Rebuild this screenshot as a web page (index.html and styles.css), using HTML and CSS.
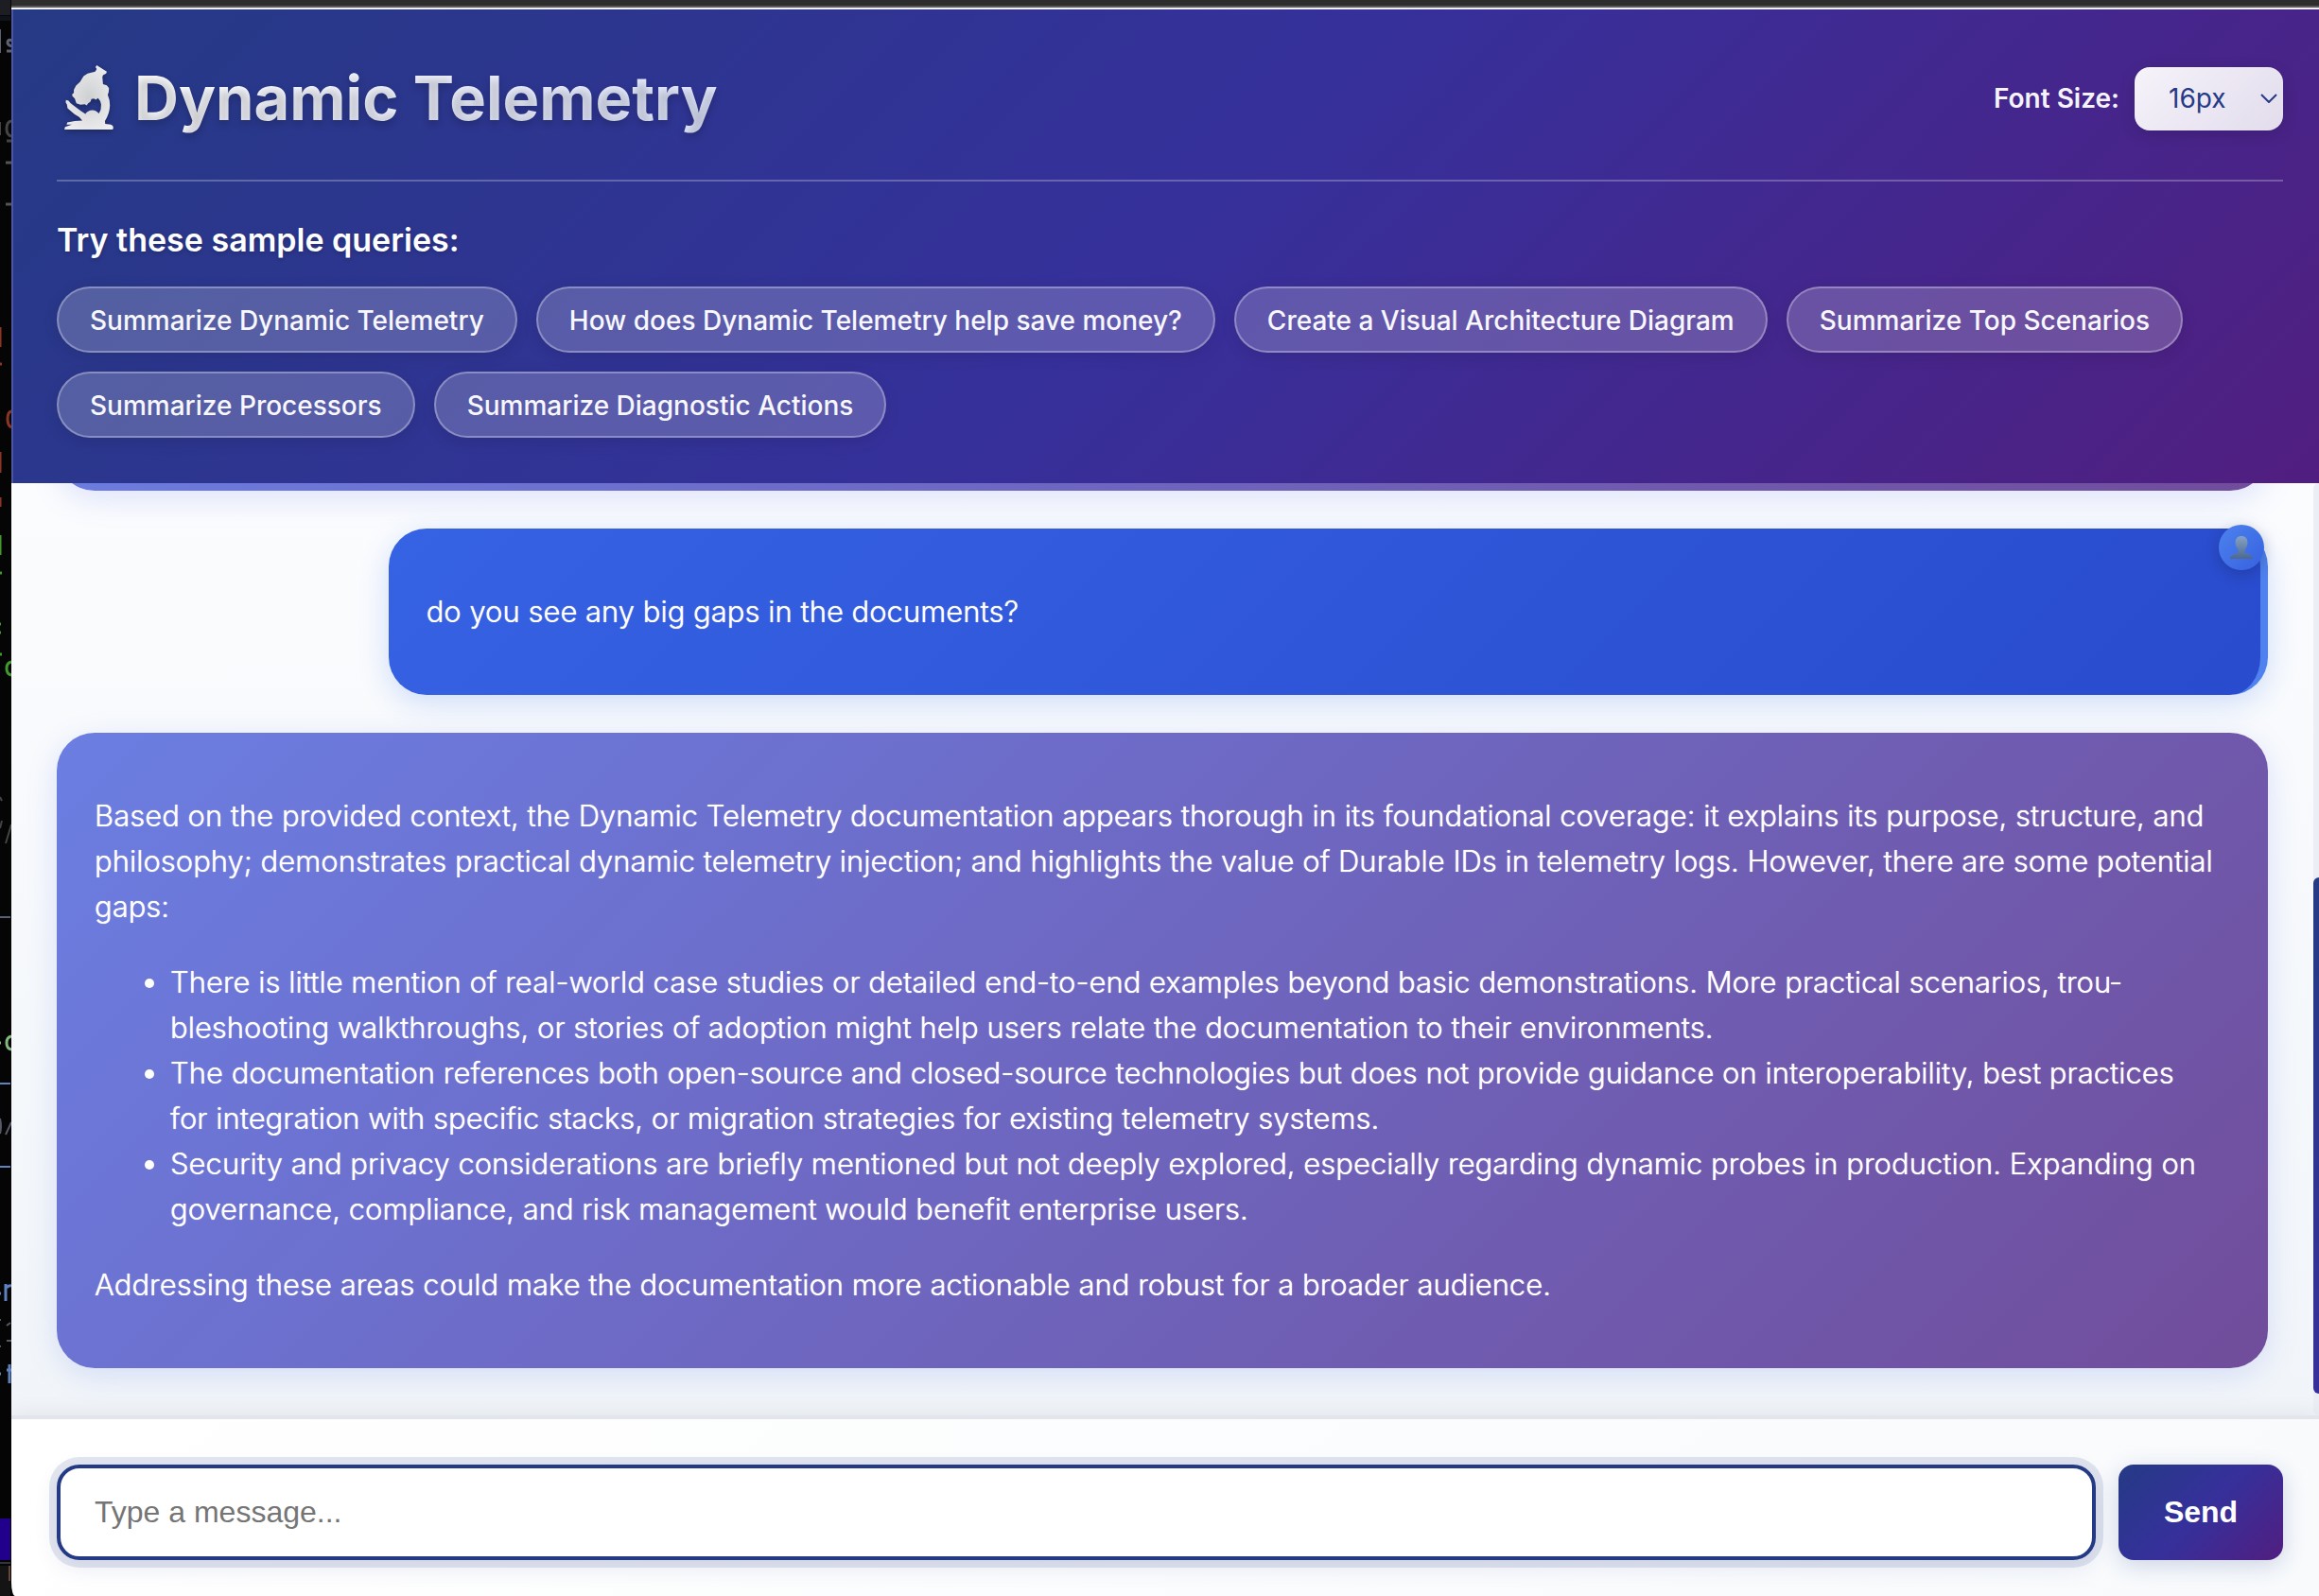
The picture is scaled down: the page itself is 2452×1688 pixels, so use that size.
FILE: index.html
```html
<!DOCTYPE html>
<html lang="en">
<head>
<meta charset="utf-8">
<title>Dynamic Telemetry</title>
<link rel="stylesheet" href="styles.css">
</head>
<body>
<div class="desktop">
  <svg class="terminal" width="12" height="1688" viewBox="0 0 12 1688" aria-hidden="true">
    <rect width="11" height="16" fill="#1c1e24"/>
    <rect y="17" width="11" height="5" fill="#0e131b"/>
    <g fill="none" stroke-width="3">
      <path d="M0 31v25" stroke="#5d6273" stroke-width="2"/>
      <path d="M13 43q-5-2-5 2 0 3 5 4M7 54h5" stroke="#5d6273"/>
      <path d="M0 129v14" stroke="#444" stroke-width="2"/>
      <path d="M12 128q-5 1-5 8t5 8M7 149h5" stroke="#444"/>
      <path d="M6 172h6M6 216h6" stroke="#555"/>
      <path d="M0 346v21M0 478v22M0 526v10" stroke="#8c3526" stroke-width="3"/>
      <path d="M0 385h2M12 435q-4 1-4 8t4 9" stroke="#8c3526"/>
      <path d="M0 566v21M0 606h2M0 660h1M0 669h1M0 692h2M12 700q-5 1-5 7t5 7" stroke="#419a2d"/>
      <path d="M0 843l2 4M0 876l2-8M6 892l6-20" stroke="#444" stroke-width="2"/>
      <path d="M0 970h11" stroke="#5b5f75" stroke-width="2"/>
      <path d="M0 1103h1M12 1096q-5 1-5 7t5 7" stroke="#84b97e"/>
      <path d="M0 1146h11M0 1234h11" stroke="#5e82bd" stroke-width="2"/>
      <path d="M0 1183q2 8 0 16M6 1200l6-13" stroke="#555968" stroke-width="2"/>
      <path d="M0 1368h1M6 1358v18M7 1362q2-3 5-2M0 1453h1M7 1449h5M10 1443v20" stroke="#5e82bd"/>
      <path d="M7 1402l4-3M7 1418h5M0 1396h1M0 1424h1" stroke="#555968" stroke-width="2"/>
    </g>
    <rect y="1606" width="11" height="44" fill="#21008c"/>
    <rect y="1652" width="11" height="2" fill="#333638"/>
    <rect y="1656" width="11" height="32" fill="#141414"/>
    <path d="M10 1656v16" stroke="#6b4537" stroke-width="2"/>
  </svg>

  <div class="window">
    <div class="titlebar"></div>
    <header class="header">
      <div class="header-top">
        <h1 class="title">
          <svg class="microscope" viewBox="60 54 204 214" aria-hidden="true">
            <defs>
              <radialGradient id="metal" cx="50%" cy="50%" r="60%">
                <stop offset="0" stop-color="#cfd0d2"/>
                <stop offset="1" stop-color="#eeeeef"/>
              </radialGradient>
            </defs>
            <path fill="url(#metal)" d="M187 54L219 74 217 80 207 86 205 92 207 114 219 118 226 127 225 140 222 148Q229 164 229 182 228 208 213 232L214 241 232 243Q240 246 240 253L238 259H84L86 251 108 243 91 243 93 236 117 232 141 230 131 219 116 210 94 191 92 179 88 172 89 165 97 167 104 175 137 200 151 209Q158 198 173 197 186 198 194 208 202 196 201 180 199 166 191 159L184 164 178 160 170 162 167 170 159 176 155 182 149 178 135 180 122 175 117 160 109 152 109 146 114 142 114 132 121 119 134 107 145 89 158 80 182 74 187 66 183 60Z"/>
          </svg>
          <span class="title-text">Dynamic Telemetry</span>
        </h1>
        <div class="font-control">
          <label for="font-size">Font Size:</label>
          <div class="select-wrap">
            <select id="font-size" class="font-select">
              <option>14px</option>
              <option selected>16px</option>
              <option>18px</option>
            </select>
            <svg class="chevron" viewBox="0 0 18 10" aria-hidden="true"><path d="M1 1l8 8 8-8" fill="none" stroke="#253a85" stroke-width="2"/></svg>
          </div>
        </div>
      </div>
      <h2 class="samples-title">Try these sample queries:</h2>
      <div class="samples">
        <button type="button" class="sample">Summarize Dynamic Telemetry</button>
        <button type="button" class="sample">How does Dynamic Telemetry help save money?</button>
        <button type="button" class="sample">Create a Visual Architecture Diagram</button>
        <button type="button" class="sample">Summarize Top Scenarios</button>
        <button type="button" class="sample">Summarize Processors</button>
        <button type="button" class="sample">Summarize Diagnostic Actions</button>
      </div>
    </header>

    <main class="chat">
      <div class="messages">
        <div class="message assistant previous"></div>
        <div class="message user">
          <p>do you see any big gaps in the documents?</p>
          <span class="avatar">
            <svg viewBox="0 0 24 24" aria-hidden="true">
              <defs>
                <linearGradient id="bust" x1="0" y1="0" x2="0" y2="1">
                  <stop offset="0" stop-color="#86a3c6"/>
                  <stop offset="1" stop-color="#4c6890"/>
                </linearGradient>
              </defs>
              <path fill="url(#bust)" d="M12 0c4 0 6.500 2.500 6.500 7 0 3-1.500 5.500-3 7.500v2.500c1.500 2 7 1.500 8.500 6.500v.5H0v-.5c1.500-5 7-4.500 8.500-6.500v-2.500c-1.500-2-3-4.500-3-7.500 0-4.500 2.500-7 6.500-7z"/>
            </svg>
          </span>
        </div>
        <div class="message assistant">
          <p>Based on the provided context, the Dynamic Telemetry documentation appears thorough in its foundational coverage: it explains its purpose, structure, and philosophy; demonstrates practical dynamic telemetry injection; and highlights the value of Durable IDs in telemetry logs. However, there are some potential gaps:</p>
          <ul>
            <li>There is little mention of real-world case studies or detailed end-to-end examples beyond basic demonstrations. More practical scenarios, trou&shy;bleshooting walkthroughs, or stories of adoption might help users relate the documentation to their environments.</li>
            <li>The documentation references both open-source and closed-source technologies but does not provide guidance on interoperability, best practices for integration with specific stacks, or migration strategies for existing telemetry systems.</li>
            <li>Security and privacy considerations are briefly mentioned but not deeply explored, especially regarding dynamic probes in production. Expanding on governance, compliance, and risk management would benefit enterprise users.</li>
          </ul>
          <p>Addressing these areas could make the documentation more actionable and robust for a broader audience.</p>
        </div>
      </div>
      <div class="scroll-track"><div class="scroll-thumb"></div></div>
    </main>

    <form class="composer">
      <input class="composer-input" type="text" placeholder="Type a message..." aria-label="Message">
      <button type="button" class="send">Send</button>
    </form>
  </div>
</div>
</body>
</html>
```
FILE: styles.css
```css
* {
  box-sizing: border-box;
}

body {
  margin: 0;
  background: #050505;
  font-family: Inter, "Liberation Sans", sans-serif;
  overflow: hidden;
}

.desktop {
  display: flex;
  height: 100vh;
  overflow: hidden;
}

.terminal {
  flex: none;
}

.window {
  flex: 1;
  min-width: 0;
  display: flex;
  flex-direction: column;
  overflow: hidden;
  border-bottom-left-radius: 4px 14px;
}

.titlebar {
  flex: none;
  height: 10px;
  background: linear-gradient(#2d2d2d 6px, #5a5a5a 6px, #5a5a5a 8px, #f0f0f2 8px);
}

.header {
  flex: none;
  padding: 48px 38px 48px 46px;
  border-left: 2px solid #4c56a3;
  background: linear-gradient(135deg, #253a85 0%, #36309b 50%, #511e80 100%);
  color: #fff;
}

.header-top {
  display: flex;
  justify-content: space-between;
  align-items: center;
  height: 134px;
  padding-bottom: 40px;
  border-bottom: 2px solid rgba(255, 255, 255, 0.25);
}

.title {
  display: flex;
  align-items: center;
  gap: 14px;
  margin: 0;
  font-size: 65px;
  line-height: 92px;
  font-weight: 700;
}

.microscope {
  width: 68px;
  height: 71px;
  overflow: visible;
  filter: drop-shadow(0 2px 3px rgba(0, 0, 0, 0.3));
}

.title-text {
  background: linear-gradient(135deg, #fff, #e0e7ff);
  -webkit-background-clip: text;
  background-clip: text;
  -webkit-text-fill-color: transparent;
  text-shadow: 0 4px 8px rgba(0, 0, 0, 0.2);
}

.font-control {
  display: flex;
  align-items: center;
  gap: 16px;
  font-size: 28px;
  font-weight: 600;
  color: #f5f3fb;
}

.select-wrap {
  position: relative;
}

.font-select {
  display: block;
  appearance: none;
  width: 157px;
  height: 67px;
  padding: 0 36px;
  border: 0;
  border-radius: 16px;
  background: linear-gradient(135deg, #f6f3fa, #e2dcec);
  box-shadow: 0 4px 16px rgba(0, 0, 0, 0.15);
  color: #253a85;
  font: 400 28px Inter, "Liberation Sans", sans-serif;
}

.chevron {
  position: absolute;
  top: 28px;
  right: 6px;
  width: 18px;
  height: 10px;
}

.samples-title {
  margin: 40px 0 27px;
  font-size: 34px;
  line-height: 44px;
  font-weight: 600;
  text-shadow: 0 2px 4px rgba(0, 0, 0, 0.2);
}

.samples {
  display: flex;
  flex-wrap: wrap;
  gap: 20px;
}

.sample {
  height: 70px;
  padding: 1px 33px 0;
  border: 2px solid rgba(255, 255, 255, 0.3);
  border-radius: 35px;
  background: rgba(255, 255, 255, 0.2);
  box-shadow: 0 4px 16px rgba(0, 0, 0, 0.1);
  color: #f7f7fc;
  font: 500 28px Inter, "Liberation Sans", sans-serif;
}

.chat {
  flex: 1;
  min-height: 0;
  display: flex;
  overflow: hidden;
  background: linear-gradient(#fbfcfe, #f1f5f9);
}

.messages {
  flex: 1;
  min-width: 0;
  display: flex;
  flex-direction: column;
  justify-content: flex-end;
  gap: 40px;
  padding: 0 48px 50px;
}

.message {
  flex: none;
  padding: 32px 40px;
  border-radius: 40px;
  color: #fff;
  font-size: 31px;
  font-weight: 300;
  line-height: 48px;
  text-shadow: 0 0 1px #fff;
}

.message p,
.message ul {
  margin: 32px 0;
}

.message ul {
  padding: 0 16px 0 80px;
}

.assistant {
  background: linear-gradient(135deg, #6b7ee2 0%, #714d9b 100%);
  box-shadow: 0 8px 32px rgba(102, 126, 234, 0.2);
}

.previous {
  height: 120px;
}

.user {
  position: relative;
  margin-left: 15%;
  border-right: 8px solid #4f82ee;
  background: linear-gradient(135deg, #3662e4 0%, #294bcd 100%);
  box-shadow: 0 8px 32px rgba(37, 99, 235, 0.2);
}

.avatar {
  position: absolute;
  top: -4px;
  right: -4px;
  display: grid;
  place-items: center;
  width: 48px;
  height: 48px;
  border-radius: 50%;
  background: linear-gradient(135deg, #4c82ee, #3761e0);
  box-shadow: 0 4px 16px rgba(0, 0, 0, 0.2);
}

.avatar svg {
  width: 24px;
  height: 24px;
}

.scroll-track {
  flex: none;
  width: 6px;
  padding-top: 417px;
  border-radius: 8px 0 0 8px;
  background: #eceef6;
}

.scroll-thumb {
  height: 546px;
  border-radius: 6px 0 0 6px;
  background: linear-gradient(#253a85, #36309b);
}

.composer {
  position: relative;
  flex: none;
  display: flex;
  gap: 24px;
  padding: 48px 38px 38px 48px;
  border-top: 4px solid #e2e6ec;
  background: linear-gradient(135deg, #fff, #f8fafc);
  box-shadow: 0 -4px 20px rgba(0, 0, 0, 0.06);
}

.composer-input {
  flex: 1;
  min-width: 0;
  height: 101px;
  padding: 0 36px;
  border: 4px solid #253a85;
  border-radius: 24px;
  outline: 0;
  background: #fff;
  box-shadow: 0 0 0 8px rgba(37, 58, 133, 0.12), 0 8px 24px rgba(37, 58, 133, 0.1);
  color: #222;
  font: 32px "Liberation Sans", Arial, sans-serif;
}

.composer-input::placeholder {
  color: #757575;
}

.send {
  width: 174px;
  height: 101px;
  border: 0;
  border-radius: 16px;
  background: linear-gradient(135deg, #253a85 0%, #36309b 50%, #511e80 100%);
  box-shadow: 0 6px 24px rgba(37, 58, 133, 0.2);
  color: #fff;
  font: 700 32px "Liberation Sans", Arial, sans-serif;
}
```
